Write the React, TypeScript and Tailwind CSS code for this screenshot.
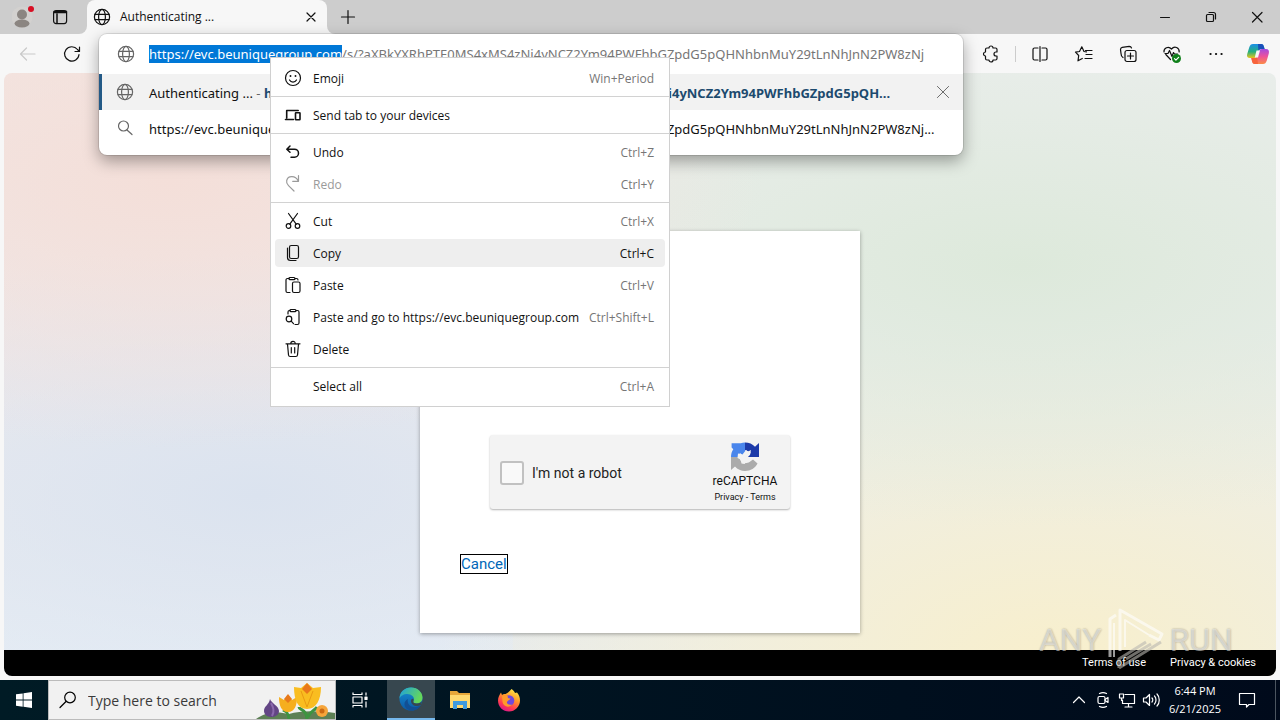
import { useEffect, useRef, type ReactNode } from "react"

const SITE = "https://evc.beuniquegroup.com"
const PATH = "/s/?aXBkYXRhPTE0MS4xMS4zNi4yNCZ2Ym94PWFhbGZpdG5pQHNhbnMuY29tLnNhJnN2PW8zNj"

type IconProps = { children: ReactNode; className?: string }

const Icon = ({ children, className = "size-5" }: IconProps) => (
  <svg
    viewBox="0 0 20 20"
    className={`shrink-0 ${className}`}
    fill="none"
    stroke="currentColor"
    strokeWidth="1.2"
    strokeLinecap="round"
    strokeLinejoin="round"
    aria-hidden="true"
  >
    {children}
  </svg>
)

const Globe = ({ className = "size-5" }: { className?: string }) => (
  <Icon className={className}>
    <circle cx="10" cy="10" r="7.6" />
    <ellipse cx="10" cy="10" rx="3.4" ry="7.6" />
    <path d="M3 7.4h14M3 12.6h14" />
  </Icon>
)

const TabStrip = () => (
  <header className="flex h-[34px] bg-[#f7f7f7]">
    <div className="flex w-[87px] items-center rounded-br-lg bg-[#cdcdcd] pl-3">
      <button aria-label="Profile" className="w-6">
        <svg viewBox="0 0 24 24" className="size-6">
          <circle cx="10" cy="12" r="10.5" fill="#d3d1cf" />
          <circle cx="10" cy="9.500" r="5" fill="#8b8581" />
          <ellipse cx="10" cy="18.500" rx="7.500" ry="4" fill="#8b8581" />
          <circle cx="19" cy="4" r="3" fill="#d80f24" />
        </svg>
      </button>
      <button aria-label="Tab actions menu" className="ml-[14px]">
        <Icon>
          <rect x="3.600" y="3.600" width="13" height="13" rx="2.500" />
          <path d="M4 5.500h12.500M4 4.500h12.500M7 7v9" strokeWidth="1.500" />
        </Icon>
      </button>
    </div>
    <div className="w-60 bg-[#cdcdcd]">
      <div className="flex h-full items-center rounded-t-lg bg-[#f7f7f7] pr-[6px] pl-[5px]">
        <Globe />
        <span className="ml-2 flex-1 text-[12px]">Authenticating ...</span>
        <button aria-label="Close tab">
          <Icon>
            <path d="M6 6l8 8M14 6l-8 8" />
          </Icon>
        </button>
      </div>
    </div>
    <div className="flex flex-1 items-center rounded-bl-lg bg-[#cdcdcd]">
      <button aria-label="New tab" className="ml-[11px]">
        <Icon>
          <path d="M10 3.500v13M3.500 10h13" />
        </Icon>
      </button>
      <div className="flex-1" />
      <button aria-label="Minimize" className="flex w-[46px] justify-center">
        <Icon>
          <path d="M5.500 10.500h9" strokeWidth="1" />
        </Icon>
      </button>
      <button aria-label="Restore" className="flex w-[46px] justify-center">
        <Icon>
          <rect x="5.500" y="7.500" width="7" height="7" rx="1" />
          <path d="M8 5.500h4.500a2 2 0 0 1 2 2V12" />
        </Icon>
      </button>
      <button aria-label="Close" className="flex w-[46px] justify-center">
        <Icon>
          <path d="M5.500 5.500l9.500 9.500M15 5.500L5.500 15" />
        </Icon>
      </button>
    </div>
  </header>
)

const AddressBar = () => {
  const input = useRef<HTMLInputElement>(null)

  useEffect(() => {
    input.current?.focus()
    input.current?.setSelectionRange(0, SITE.length)
  }, [])

  return (
    <div className="relative h-full flex-1">
      <div className="absolute inset-x-0 top-0 z-10 h-[121px] overflow-hidden rounded-lg bg-white font-['Noto_Sans','Open_Sans',sans-serif] text-[13px] shadow-[0_6px_16px_rgba(0,0,0,0.35)] ring-1 ring-black/10">
        <div className="flex h-10 items-center pl-[17px]">
          <Globe className="size-5 text-[#666]" />
          <input
            ref={input}
            aria-label="Address and search bar"
            defaultValue={SITE + PATH}
            className="ml-[13px] h-6 min-w-0 flex-1 leading-[22px] text-[#767676] outline-none selection:bg-[#0078d7] selection:text-white"
          />
        </div>
        <div className="flex h-9 items-center border-l-[3px] border-[#235a87] bg-[#f2f2f2] pr-3 pl-[13px]">
          <Globe className="size-5 text-[#666]" />
          <p className="ml-[14px] min-w-0 flex-1 pt-1 whitespace-nowrap">
            Authenticating ...<span className="text-[#666]"> - </span>
            <b className="font-bold text-[#1c4a6e]">
              {SITE}/s/?aXBkYXRhPTE0MS4xMS4zNi4yNCZ2Ym94PWFhbGZpdG5pQH...
            </b>
          </p>
          <button aria-label="Remove suggestion" className="text-[#666]">
            <Icon className="size-4">
              <path d="M3 3l14 14M17 3L3 17" />
            </Icon>
          </button>
        </div>
        <div className="flex h-9 items-center pl-4">
          <Icon className="size-5 text-[#666]">
            <circle cx="8.500" cy="8" r="5" />
            <path d="M12 12l5 4.500" />
          </Icon>
          <p className="ml-[14px] min-w-0 flex-1 pt-1 whitespace-nowrap">
            {SITE}
            {PATH}...
          </p>
        </div>
      </div>
      <ContextMenu />
    </div>
  )
}

type Item = { label: string; keys?: string; icon?: ReactNode; state?: "disabled" | "active" }

const menu: Item[][] = [
  [
    {
      label: "Emoji",
      keys: "Win+Period",
      icon: (
        <>
          <circle cx="10" cy="10" r="7.500" />
          <path d="M6.500 12c1.500 2.700 5.500 2.700 7 0" />
          <path d="M7.500 8v.1M12.500 8v.1" strokeWidth="1.900" />
        </>
      ),
    },
  ],
  [
    {
      label: "Send tab to your devices",
      icon: (
        <>
          <path d="M3.700 13V5.500h11.500M2.500 14.500h8" strokeWidth="1.600" />
          <rect x="12.500" y="7.800" width="4.500" height="7" rx=".5" strokeWidth="1.600" />
        </>
      ),
    },
  ],
  [
    {
      label: "Undo",
      keys: "Ctrl+Z",
      icon: <path d="M7 4L3.800 7.200 7 10.300M4 7.200h7.500a4 4 0 0 1 0 8H8" strokeWidth="1.500" />,
    },
    {
      label: "Redo",
      keys: "Ctrl+Y",
      state: "disabled",
      icon: <path d="M15.500 1.500v5.800h-5.800M15.300 7C12.500 1.500 5 1.200 3.700 6.500c-.5 2 .3 3.600 1.800 5.100l5.500 5.400" />,
    },
  ],
  [
    {
      label: "Cut",
      keys: "Ctrl+X",
      icon: (
        <>
          <circle cx="5.500" cy="15" r="2.300" />
          <circle cx="14.500" cy="15" r="2.300" />
          <path d="M5.500 2.500l7.700 10.700M14.500 2.500L6.800 13.200" />
        </>
      ),
    },
    {
      label: "Copy",
      keys: "Ctrl+C",
      state: "active",
      icon: (
        <>
          <rect x="6.500" y="2.500" width="9" height="13" rx="1.800" />
          <path d="M4.500 5v9.500a3 3 0 0 0 3 3H13" />
        </>
      ),
    },
    {
      label: "Paste",
      keys: "Ctrl+V",
      icon: (
        <>
          <rect x="9.500" y="7" width="7.500" height="10.500" rx="1.500" />
          <path d="M7 17.500H4.500A1.500 1.500 0 0 1 3 16V5a1.500 1.500 0 0 1 1.500-1.500H6M12 3.500h1.500A1.500 1.500 0 0 1 15 5" />
          <rect x="6" y="2.500" width="6" height="2.200" rx="1" />
        </>
      ),
    },
    {
      label: `Paste and go to ${SITE}`,
      keys: "Ctrl+Shift+L",
      icon: (
        <>
          <path d="M5 7V5a1.500 1.500 0 0 1 1.500-1.500H7M13 3.500h1.500A1.500 1.500 0 0 1 16 5v11a1.500 1.500 0 0 1-1.500 1.500H12" />
          <rect x="7" y="2.500" width="6" height="2.200" rx="1" />
          <circle cx="6" cy="12" r="2.800" />
          <path d="M8.200 14.200l2.300 2.500" />
        </>
      ),
    },
    {
      label: "Delete",
      icon: (
        <>
          <path d="M3 4.800h14M7.800 4.500a2.200 2.200 0 0 1 4.400 0M4.500 5l1 11a1.700 1.700 0 0 0 1.700 1.500h5.600a1.700 1.700 0 0 0 1.700-1.500l1-11" />
          <path d="M8.300 8.500v5.500M11.700 8.500v5.500" />
        </>
      ),
    },
  ],
  [{ label: "Select all", keys: "Ctrl+A" }],
]

const ContextMenu = () => (
  <div
    role="menu"
    className="absolute top-[23px] left-[171px] z-20 w-[400px] border border-[#d0d0d0] bg-white py-1 text-[12px]"
  >
    {menu.map((group, i) => (
      <div key={group[0].label}>
        {i > 0 && <hr className="my-[2px] border-[#d2d2d2]" />}
        {group.map((item) => (
          <button
            key={item.label}
            role="menuitem"
            disabled={item.state === "disabled"}
            className={`flex h-8 w-full px-1 py-[2px] text-left ${
              item.state === "disabled" ? "text-[#9a9a9a]" : "text-[#111]"
            }`}
          >
            <span
              className={`flex h-full w-full items-center rounded-sm pr-[11px] pl-2 ${
                item.state === "active" ? "bg-[#eee]" : ""
              }`}
            >
              <Icon>{item.icon}</Icon>
              <span className="ml-[10px] flex-1 pt-[2px] whitespace-nowrap">{item.label}</span>
              <span className={`pt-[2px] ${item.state === "active" ? "" : "text-[#767676]"}`}>
                {item.keys}
              </span>
            </span>
          </button>
        ))}
      </div>
    ))}
  </div>
)

const Toolbar = () => (
  <div className="flex h-[39px] items-center bg-[#f7f7f7]">
    <div className="flex w-[99px] items-center gap-6 pl-[18px]">
      <button aria-label="Back" disabled className="text-[#c9c9c9]">
        <Icon>
          <path d="M2.500 10h14.500M8.500 4l-6 6 6 6" />
        </Icon>
      </button>
      <button aria-label="Refresh">
        <Icon>
          <path d="M17 10.500A7.200 7.200 0 1 1 15.500 5.500L17.300 7.400M17.500 3v4.500H13" />
        </Icon>
      </button>
    </div>
    <AddressBar />
    <div className="flex items-center gap-6 pr-[10px] pl-[18px]">
      <button aria-label="Extensions">
        <Icon>
          <path d="M6 4h2a2 2 0 1 1 4 0h2.500A1.500 1.500 0 0 1 16 5.500V8h-1a2 2 0 1 0 0 4h1v2.500a1.500 1.500 0 0 1-1.500 1.500H12a2 2 0 1 1-4 0H6a1.500 1.500 0 0 1-1.500-1.500V12a2 2 0 1 1 0-4V5.500A1.500 1.500 0 0 1 6 4z" />
        </Icon>
      </button>
      <div className="-mr-2 -ml-[10px] flex items-center gap-[14px]">
        <span className="h-4 w-px bg-[#ccc]" />
        <button aria-label="Split screen">
          <Icon>
            <path d="M8 4H4.500A1.500 1.500 0 0 0 3 5.500v9A1.500 1.500 0 0 0 4.500 16H8M12 4h3.500A1.500 1.500 0 0 1 17 5.500v9a1.500 1.500 0 0 1-1.500 1.500H12M10 2.500v15" />
          </Icon>
        </button>
      </div>
      <button aria-label="Favorites" className="ml-2">
        <Icon>
          <path d="M12.500 7.800L10 7.500 7.800 2.800 5.500 7.500l-4 .7 3.200 3.300L4 16.800l4.300-2.300M11.500 6.500h6.500M12 10.500h6M11 14.500h7" />
        </Icon>
      </button>
      <button aria-label="Collections">
        <Icon>
          <rect x="7" y="6.500" width="11" height="11" rx="2" />
          <path d="M12.500 9v6M9.500 12h6M5 13.500C3.500 12.500 3 11 3 9.500L2.500 5.500c0-1 .5-2 1.700-2.200l7-1c1.300 0 2 .7 2.300 1.700" />
        </Icon>
      </button>
      <button aria-label="Browser essentials">
        <Icon>
          <path d="M8.500 15.500L3.800 10.500M2 8C1.500 4 6.500 1.500 9.500 5c3-3.500 8-1.500 7.700 3M3 9.500h3l1.500-3 2.500 6 1.500-4 1 1.500h3" />
          <circle cx="14.500" cy="14.500" r="4.500" fill="#10801b" stroke="none" />
          <path d="M12.500 14.700l1.400 1.400 2.700-2.800" stroke="#fff" />
        </Icon>
      </button>
      <button aria-label="Settings and more">
        <Icon>
          <path d="M4.500 10h.1M10 10h.1M15.500 10h.1" strokeWidth="2.200" />
        </Icon>
      </button>
      <button aria-label="Copilot" className="-ml-1">
        <svg viewBox="0 0 24 24" className="size-6">
          <defs>
            <linearGradient id="cpA" x1="0" y1="0" x2="0" y2="1">
              <stop offset="0" stopColor="#1b8fe8" />
              <stop offset=".55" stopColor="#25b07e" />
              <stop offset="1" stopColor="#e9c51a" />
            </linearGradient>
            <linearGradient id="cpB" x1="0" y1="0" x2="0" y2="1">
              <stop offset="0" stopColor="#a44be0" />
              <stop offset=".5" stopColor="#ee5299" />
              <stop offset="1" stopColor="#fb8b45" />
            </linearGradient>
          </defs>
          <path d="M7 2h8c2 0 2.500 1 3 3l.6 2h-3c-2 0-3 1-3.500 3l-1 3.500c-.5 1.500-1 2.500-3 2.500H4c-2.500 0-3.500-1.500-2.800-4l2-6.500C4 3 5 2 7 2z" fill="url(#cpA)" />
          <path d="M17 22H9c-2 0-2.500-1-3-3l-.7-3h3c2 0 2.700-1 3.200-2.500l1.300-4C13.300 8 14 7 16 7h4c2.500 0 3.500 2 2.800 4.500l-2 7C20 21 19 22 17 22z" fill="url(#cpB)" />
          <path d="M12 2h3c2 0 2.500 1 3 3l.6 2h-3c-1.600 0-2.600.6-3.200 2z" fill="#1a4fb9" />
          <path d="M12 22H9c-2 0-2.500-1-3-3l-.7-3h3c1.400 0 2.300-.5 2.800-1.500z" fill="#f7633c" />
          <path d="M10.500 8.500h3.500l-2 7H8.800z" fill="#f7f7f7" />
        </svg>
      </button>
    </div>
  </div>
)

const Captcha = () => (
  <div className="mx-auto flex h-[74px] w-[300px] items-center rounded-[3px] bg-[#f3f3f3] pt-[2px] font-['Roboto',sans-serif] shadow-[0_1px_2px_rgba(0,0,0,0.3)]">
    <input
      id="robot"
      type="checkbox"
      className="ml-[10px] size-6 appearance-none rounded-[3px] border-2 border-[#c1c1c1] bg-[#f9f9f9]"
    />
    <label htmlFor="robot" className="ml-2 flex-1 text-[14px] text-[#222]">
      I'm not a robot
    </label>
    <div className="mr-[10px] flex w-[70px] flex-col items-center">
      <svg viewBox="0 0 32 32" className="size-8">
        <path d="M2 16c0-3 .8-5.600 2.300-7.800L2.600 6.400V2.200h9.200c1.300-.4 2.700-.7 4.200-.7V9l1.300 2.500-3.300 3L11 12l-2 4z" fill="#4a86ec" />
        <path d="M16 1.500c4 0 7.500 1.600 10 4.200L30 2v14H19l2.800-4.600L16 9z" fill="#1c3aa9" />
        <path d="M2 16h8.500c0 3 2.500 6 6 6 1.500 0 3-.3 4-1l3.500-2.500 4.500 4C26.500 27 21.500 30 16 30c-4 0-7.500-1.700-10-4.500L2 29z" fill="#ababab" />
        <path d="M9 12.500l4.500 1L17 9l2 1.500 3-1.500-1 5-4 3 1.500 3-3 3-3-.5-1-4-3-1.500z" fill="#f3f3f3" />
      </svg>
      <span className="text-[12px] leading-4">reCAPTCHA</span>
      <p className="text-[9px] leading-4 whitespace-nowrap">
        <a href="#privacy">Privacy</a> - <a href="#terms">Terms</a>
      </p>
    </div>
  </div>
)

const Watermark = () => (
  <div className="pointer-events-none absolute right-[43px] bottom-[3px] flex items-center gap-1 font-['Roboto',sans-serif] text-[32px] leading-none text-white/50 [text-shadow:0_0_2px_rgba(0,0,0,0.35)]">
    <span>ANY</span>
    <svg viewBox="0 0 60 66" className="h-[66px] w-[60px]" fill="none" stroke="#fff" strokeWidth="3" strokeLinejoin="round" opacity=".6">
      <path d="M14 44V3L56 27l-3 6-10-5" />
      <path d="M19 40V13l24 15" strokeWidth="2" />
      <path d="M13 61l42-26M13 61V52l27-17M20 52l25-15" stroke="#b9b7b1" />
      <path d="M4 50V12l6-4" />
      <path d="M8 50V16" strokeWidth="2" />
    </svg>
    <span>RUN</span>
  </div>
)

const Page = () => (
  <main className="relative mx-1 mb-1 flex flex-1 flex-col overflow-hidden rounded-lg bg-[#ebeeed] bg-[radial-gradient(ellipse_at_13%_18%,#f4dfd9_0%,transparent_38%),radial-gradient(ellipse_at_80%_32%,#dde9db_0%,transparent_45%),radial-gradient(ellipse_at_83%_98%,#f8efcc_0%,transparent_42%),radial-gradient(ellipse_at_20%_70%,#dbe3ef_0%,transparent_42%),linear-gradient(to_bottom,#f2e6e3_0%,#e6eef6_100%)] bg-[size:100%_100%,100%_100%,100%_100%,100%_100%,40%_100%] bg-no-repeat font-['Roboto',sans-serif]">
    <div className="flex flex-1 justify-center pt-[158px]">
      <section className="mb-[17px] w-[440px] bg-white pt-[204px] shadow-[0_1px_4px_rgba(0,0,0,0.35)]">
        <Captcha />
        <a href="#cancel" className="mt-[45px] ml-10 inline-block border border-black text-[15px] leading-[18px] text-[#0067b8]">
          Cancel
        </a>
      </section>
    </div>
    <footer className="flex h-[26px] items-center justify-end gap-6 bg-black pr-5 text-[11px] text-white">
      <a href="#terms-of-use">Terms of use</a>
      <a href="#privacy-cookies">Privacy &amp; cookies</a>
    </footer>
    <Watermark />
  </main>
)

const Flowers = () => (
  <svg viewBox="0 0 80 38" className="h-[38px] w-20">
    <path d="M1 38C10 31 22 30 34 33c12-4 32-3 46-1v6z" fill="#5d8055" />
    <path d="M15 18c1 4 9 7 9 12 0 4-4 6-8 6s-7-3-7-6c0-5 5-6 6-12z" fill="#634585" />
    <path d="M16 22c2 4 4 8 1 13" stroke="#8b69ad" strokeWidth="2" fill="none" />
    <path d="M34 38c-1-8-4-8-6-9M52 38c0-10-8-9-8-12M53 36c3-7 7-6 9-10" stroke="#3d9440" strokeWidth="3" fill="none" />
    <path d="M24 16l5 3 4-5 4 5 5-3c0 8-2 15-9 15s-9-7-9-15z" fill="#f5ae1e" />
    <path d="M29 18l4-5 4 5-4 4z" fill="#e7791b" />
    <path d="M39 6l7 1 6-5 6 5 8-1c0 13-5 22-14 22S39 19 39 6z" fill="#f9bd20" />
    <path d="M47 8l5-6 5 6-5 5z" fill="#e9781b" />
    <path d="M46 10l6 16 6-16" stroke="#e99a12" fill="none" />
    <circle cx="67" cy="30" r="6" fill="#f6a53b" />
    <circle cx="67" cy="30" r="2.500" fill="#cc6a13" />
  </svg>
)

const EdgeLogo = () => (
  <svg viewBox="0 0 24 24" className="size-6">
    <defs>
      <linearGradient id="edA" x1="0" y1="0" x2="1" y2=".4">
        <stop offset="0" stopColor="#1d9fe0" />
        <stop offset="1" stopColor="#65d85a" />
      </linearGradient>
      <linearGradient id="edB" x1="0" y1="0" x2="0" y2="1">
        <stop offset="0" stopColor="#1690d4" />
        <stop offset="1" stopColor="#0c59a4" />
      </linearGradient>
    </defs>
    <circle cx="12" cy="12" r="11.500" fill="url(#edB)" />
    <path d="M.5 12C.5 4.500 6 .5 12 .5c7 0 11.500 5 11.500 10 0 4-3 6-6 6-2.500 0-4-1-3-2.500C16.500 10 12 7 8.500 7 4.500 7 1 9 .5 12z" fill="url(#edA)" />
    <path d="M9 12c-1.500 5 3 9 8.500 8 2-.4 3.500-1.300 4.500-2-4 7-12 6.500-15 3-2.500-3-2-7 2-9z" fill="#124f93" />
    <path d="M14.500 14c-1 1.500.5 2.500 3 2.500 3 0 4.700-1.300 5.500-2.500L22 18c-5 2.500-10 0-10-4 0-1.500 1.200-2.500 2.500-2z" fill="#37474f" />
  </svg>
)

const Explorer = () => (
  <svg viewBox="0 0 24 24" className="size-6">
    <path d="M2 3h7l2 2h11v14H2z" fill="#e7a73a" />
    <path d="M2 7h20v13H2z" fill="#ffd970" />
    <path d="M5 21v-8h14v8h-4v-4H9v4z" fill="#3f9ade" />
  </svg>
)

const Firefox = () => (
  <svg viewBox="0 0 24 24" className="size-6">
    <defs>
      <linearGradient id="ffA" x1=".8" y1="0" x2=".3" y2="1">
        <stop offset="0" stopColor="#fff04a" />
        <stop offset=".4" stopColor="#ff9a2a" />
        <stop offset=".75" stopColor="#ff3a51" />
        <stop offset="1" stopColor="#d9178d" />
      </linearGradient>
    </defs>
    <path d="M14.500 1c2 1 3 3 3.500 4l2-.5c2 2 3 5 3 8 0 6-5 11-11 11s-11-4.500-11-11c0-3 1.500-6 3-8l1 2.500c1-1 2-1.300 3.500-1 2-1 4-2.500 6-5z" fill="url(#ffA)" />
    <circle cx="12" cy="12.500" r="5.300" fill="#7048dd" />
    <path d="M5 8c2-1 4-1 6 .5-1 1.500 1 2 2.500 2-1 2-3 2-3.500 3.500s2 3.500 5 2.500c-3 4-9 2-9.500-3z" fill="#ff9a2a" />
  </svg>
)

const Taskbar = () => (
  <footer className="flex h-10 bg-linear-to-r from-[#001b25] to-[#000a1b] text-white">
    <button aria-label="Start" className="flex w-12 items-center justify-center">
      <svg viewBox="0 0 16 16" className="size-4" fill="currentColor">
        <path d="M0 2.300L6.700 1.400V7.600H0zM7.500 1.300L16 0v7.600H7.500zM0 8.400h6.700v6.300L0 13.700zM7.500 8.400H16V16l-8.500-1.200z" />
      </svg>
    </button>
    <label className="flex w-72 items-center border border-[#bbb] bg-[#f1f1f1] text-[#333]">
      <Icon className="ml-[9px] size-5 text-black">
        <circle cx="12" cy="7.500" r="5.300" />
        <path d="M8 11.500l-6 6" />
      </Icon>
      <input
        type="search"
        placeholder="Type here to search"
        className="ml-[10px] w-0 min-w-0 flex-1 text-[14px] outline-none placeholder:text-[#3a3a3a]"
      />
      <Flowers />
    </label>
    <button aria-label="Task View" className="flex w-12 items-center justify-center">
      <Icon>
        <path d="M3 2.500v2h9v-2M3 17.500v-2h9v2M3 7h9v6H3zM16 2.500v3M16 11.500v6" strokeLinecap="butt" />
        <path d="M15 7h2v2.500h-2z" fill="currentColor" />
      </Icon>
    </button>
    <button aria-label="Microsoft Edge" className="ml-[3px] flex w-12 items-center justify-center border-b-2 border-[#76b9ed] bg-[#37474f]">
      <EdgeLogo />
    </button>
    <button aria-label="File Explorer" className="ml-px flex w-12 items-center justify-center">
      <Explorer />
    </button>
    <button aria-label="Firefox" className="ml-px flex w-12 items-center justify-center">
      <Firefox />
    </button>
    <div className="flex flex-1 items-center justify-end">
      <button aria-label="Show hidden icons" className="w-6">
        <Icon>
          <path d="M4.500 12.500L10 7l5.500 5.500" />
        </Icon>
      </button>
      <button aria-label="Meet Now" className="w-6">
        <Icon>
          <rect x="5" y="6.500" width="7" height="7" rx="1.500" />
          <path d="M12 9.500l3-2v5l-3-2M6.500 3.500c2-1 5-1 7 0M6.500 16.500c2 1 5 1 7 0" />
        </Icon>
      </button>
      <button aria-label="Network" className="w-6">
        <Icon>
          <path d="M8 4.500h9.500v9H5.500V10M11.500 14v3M8 17h7M2.500 4h4v4h-4zM4.500 8v2.500h1" />
        </Icon>
      </button>
      <button aria-label="Volume" className="w-6">
        <Icon>
          <path d="M2.500 8h2.500l3.500-3.500v11L5 12H2.500zM11 8c1 1 1 3 0 4M13.500 6c2 2 2 6 0 8M16 4c3 3 3 9 0 12" />
        </Icon>
      </button>
      <div className="w-[60px] text-center text-[11px] leading-[18px]">
        <div>6:44 PM</div>
        <div>6/21/2025</div>
      </div>
      <button aria-label="Notifications" className="mr-[18px] ml-3">
        <Icon>
          <path d="M2.500 3.500h15v11H12l-2.500 2.500V14.500h-7z" />
        </Icon>
      </button>
      <span className="mr-1 h-full w-px bg-[#4b5560]" />
    </div>
  </footer>
)

export default function App() {
  return (
    <div className="flex min-h-screen flex-col bg-[#f7f7f7] font-['Open_Sans','Noto_Sans',sans-serif] text-[#111]">
      <TabStrip />
      <Toolbar />
      <Page />
      <Taskbar />
    </div>
  )
}
